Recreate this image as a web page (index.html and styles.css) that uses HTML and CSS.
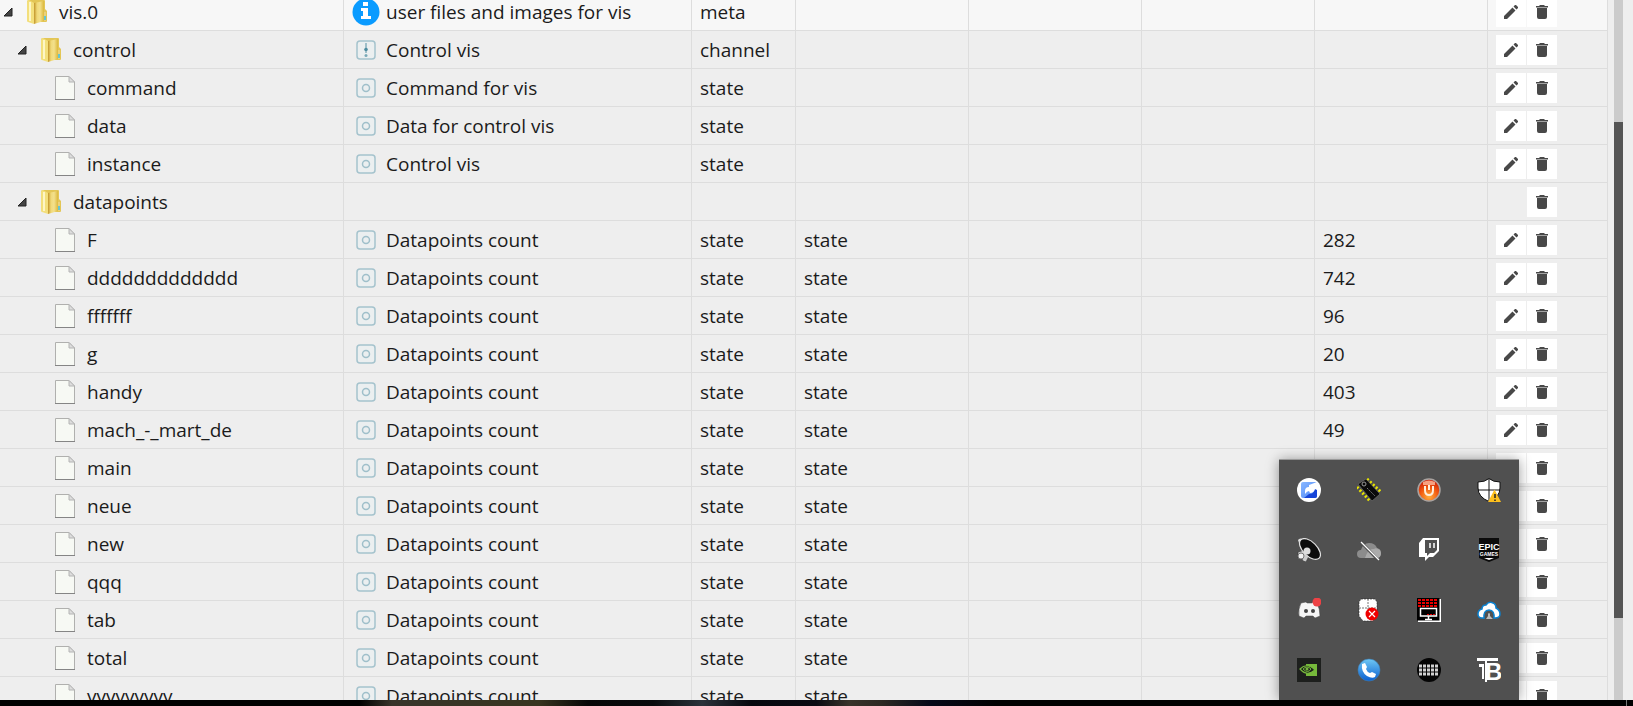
FILE: index.html
```
<!DOCTYPE html>
<html lang="en">

<head>
    <meta charset="UTF-8">
    <meta name="viewport" content="width=device-width, initial-scale=1.0">
    <title>Objects</title>
    <link rel="stylesheet" href="styles.css">
</head>

<body>
    <svg class="sprite" aria-hidden="true">
        <defs>
            <linearGradient id="gold" x1="0" x2="1">
                <stop offset="0" stop-color="#c2952a" />
                <stop offset=".3" stop-color="#f0d978" />
                <stop offset=".6" stop-color="#f3e08c" />
                <stop offset="1" stop-color="#dcb83c" />
            </linearGradient>
            <radialGradient id="red" cx=".5" cy=".8" r=".8">
                <stop offset="0" stop-color="#ffb040" />
                <stop offset=".5" stop-color="#f25a10" />
                <stop offset="1" stop-color="#c41408" />
            </radialGradient>
            <linearGradient id="blue" x2="0" y2="1">
                <stop offset="0" stop-color="#6fc8f5" />
                <stop offset="1" stop-color="#0a5fd0" />
            </linearGradient>
            <linearGradient id="square" x2="1" y2="1">
                <stop offset="0" stop-color="#8ab8ff" />
                <stop offset="1" stop-color="#4a86f8" />
            </linearGradient>
        </defs>
        <symbol id="arrow" viewBox="0 0 10 10">
            <path d="M9 1v8H1z" fill="#444" stroke="#222" stroke-linejoin="round" />
        </symbol>
        <symbol id="folder" viewBox="0 0 24 24">
            <path d="M4 0h15q1 0 1 1v8l2 2v10q0 1-1 1H4l-2-1V2q0-2 2-2z" fill="#e3c656" />
            <path d="M9 3l10-2v20l-10 3z" fill="url(#gold)" />
            <path d="M2 2q0-2 2-2l5 3v21l-6-2-1-1z" fill="#f3df7c" />
            <path d="M5 2v19" stroke="#fdf6c6" stroke-width="2" />
            <path d="M19 12h2v9h-2z" fill="#ead07a" />
            <path d="M19 16h2v4h-2z" fill="#65c5cf" />
        </symbol>
        <symbol id="file" viewBox="0 0 24 24">
            <path d="M2.5 .5H16l5.500 5.500V23.500h-19z" fill="#f7f9f4" stroke="#b0b0ae" />
            <path d="M2 23.500h20" stroke="#858585" />
            <path d="M16 .5V6h5.500z" fill="#ddd" stroke="#b4b4b4" />
        </symbol>
        <symbol id="info" viewBox="0 0 28 28">
            <circle cx="14" cy="14" r="13.500" fill="#0a9bff" />
            <path d="M11 4h5v4h-5zM9 10h7v8h3v3H9v-3h2v-5H9z" fill="#fff" />
        </symbol>
        <symbol id="channel" viewBox="0 0 20 20">
            <rect x="1" y="1" width="18" height="18" rx="3" fill="#ebeff0" stroke="#a5c3cd" stroke-width="1.500" />
            <path d="M10 3v10" stroke="#5590a2" />
            <circle cx="10" cy="9.500" r="1.800" fill="#4d8da0" />
            <circle cx="10" cy="15.500" r="1.500" fill="#79a9b7" />
        </symbol>
        <symbol id="state" viewBox="0 0 20 20">
            <rect x="1" y="1" width="18" height="18" rx="3" fill="#ebeff0" stroke="#a5c3cd" stroke-width="1.500" />
            <circle cx="10" cy="10" r="3.500" fill="none" stroke="#9fbfca" stroke-width="1.500" />
        </symbol>
        <symbol id="pencil" viewBox="0 0 14 14">
            <path d="M0 11l8.500-8.500 3 3L3 14H0zM9.500 1.500L11 0h1l2 2v1l-1.500 1.500z" fill="#484848" />
        </symbol>
        <symbol id="trash" viewBox="0 0 12 14">
            <path d="M1 3h10v9q0 2-2 2H3q-2 0-2-2zM0 1h3l1-1h4l1 1h3v1.500H0z" fill="#484848" />
        </symbol>
    </svg>

    <main class="objects">
        <table class="tree">
            <colgroup>
                <col class="col-id">
                <col class="col-name">
                <col class="col-type">
                <col class="col-mid">
                <col class="col-mid">
                <col class="col-mid">
                <col class="col-mid">
                <col class="col-buttons">
            </colgroup>
            <tbody>
                <tr class="root">
                    <td><div class="node"><svg class="arrow"><use href="#arrow" /></svg><svg class="icon"><use href="#folder" /></svg>vis.0</div></td>
                    <td><div class="name"><svg class="info"><use href="#info" /></svg>user files and images for vis</div></td>
                    <td>meta</td><td></td><td></td><td></td><td></td>
                    <td><div class="buttons"><button aria-label="Edit"><svg class="pencil"><use href="#pencil" /></svg></button><button aria-label="Delete"><svg class="trash"><use href="#trash" /></svg></button></div></td>
                </tr>
                <tr>
                    <td><div class="node level-1"><svg class="arrow"><use href="#arrow" /></svg><svg class="icon"><use href="#folder" /></svg>control</div></td>
                    <td><div class="name"><svg class="kind"><use href="#channel" /></svg>Control vis</div></td>
                    <td>channel</td><td></td><td></td><td></td><td></td>
                    <td><div class="buttons"><button aria-label="Edit"><svg class="pencil"><use href="#pencil" /></svg></button><button aria-label="Delete"><svg class="trash"><use href="#trash" /></svg></button></div></td>
                </tr>
                <tr>
                    <td><div class="node level-2"><svg class="icon"><use href="#file" /></svg>command</div></td>
                    <td><div class="name"><svg class="kind"><use href="#state" /></svg>Command for vis</div></td>
                    <td>state</td><td></td><td></td><td></td><td></td>
                    <td><div class="buttons"><button aria-label="Edit"><svg class="pencil"><use href="#pencil" /></svg></button><button aria-label="Delete"><svg class="trash"><use href="#trash" /></svg></button></div></td>
                </tr>
                <tr>
                    <td><div class="node level-2"><svg class="icon"><use href="#file" /></svg>data</div></td>
                    <td><div class="name"><svg class="kind"><use href="#state" /></svg>Data for control vis</div></td>
                    <td>state</td><td></td><td></td><td></td><td></td>
                    <td><div class="buttons"><button aria-label="Edit"><svg class="pencil"><use href="#pencil" /></svg></button><button aria-label="Delete"><svg class="trash"><use href="#trash" /></svg></button></div></td>
                </tr>
                <tr>
                    <td><div class="node level-2"><svg class="icon"><use href="#file" /></svg>instance</div></td>
                    <td><div class="name"><svg class="kind"><use href="#state" /></svg>Control vis</div></td>
                    <td>state</td><td></td><td></td><td></td><td></td>
                    <td><div class="buttons"><button aria-label="Edit"><svg class="pencil"><use href="#pencil" /></svg></button><button aria-label="Delete"><svg class="trash"><use href="#trash" /></svg></button></div></td>
                </tr>
                <tr>
                    <td><div class="node level-1"><svg class="arrow"><use href="#arrow" /></svg><svg class="icon"><use href="#folder" /></svg>datapoints</div></td>
                    <td></td><td></td><td></td><td></td><td></td><td></td>
                    <td><div class="buttons"><button aria-label="Delete"><svg class="trash"><use href="#trash" /></svg></button></div></td>
                </tr>
                <tr>
                    <td><div class="node level-2"><svg class="icon"><use href="#file" /></svg>F</div></td>
                    <td><div class="name"><svg class="kind"><use href="#state" /></svg>Datapoints count</div></td>
                    <td>state</td><td>state</td><td></td><td></td><td>282</td>
                    <td><div class="buttons"><button aria-label="Edit"><svg class="pencil"><use href="#pencil" /></svg></button><button aria-label="Delete"><svg class="trash"><use href="#trash" /></svg></button></div></td>
                </tr>
                <tr>
                    <td><div class="node level-2"><svg class="icon"><use href="#file" /></svg>ddddddddddddd</div></td>
                    <td><div class="name"><svg class="kind"><use href="#state" /></svg>Datapoints count</div></td>
                    <td>state</td><td>state</td><td></td><td></td><td>742</td>
                    <td><div class="buttons"><button aria-label="Edit"><svg class="pencil"><use href="#pencil" /></svg></button><button aria-label="Delete"><svg class="trash"><use href="#trash" /></svg></button></div></td>
                </tr>
                <tr>
                    <td><div class="node level-2"><svg class="icon"><use href="#file" /></svg>fffffff</div></td>
                    <td><div class="name"><svg class="kind"><use href="#state" /></svg>Datapoints count</div></td>
                    <td>state</td><td>state</td><td></td><td></td><td>96</td>
                    <td><div class="buttons"><button aria-label="Edit"><svg class="pencil"><use href="#pencil" /></svg></button><button aria-label="Delete"><svg class="trash"><use href="#trash" /></svg></button></div></td>
                </tr>
                <tr>
                    <td><div class="node level-2"><svg class="icon"><use href="#file" /></svg>g</div></td>
                    <td><div class="name"><svg class="kind"><use href="#state" /></svg>Datapoints count</div></td>
                    <td>state</td><td>state</td><td></td><td></td><td>20</td>
                    <td><div class="buttons"><button aria-label="Edit"><svg class="pencil"><use href="#pencil" /></svg></button><button aria-label="Delete"><svg class="trash"><use href="#trash" /></svg></button></div></td>
                </tr>
                <tr>
                    <td><div class="node level-2"><svg class="icon"><use href="#file" /></svg>handy</div></td>
                    <td><div class="name"><svg class="kind"><use href="#state" /></svg>Datapoints count</div></td>
                    <td>state</td><td>state</td><td></td><td></td><td>403</td>
                    <td><div class="buttons"><button aria-label="Edit"><svg class="pencil"><use href="#pencil" /></svg></button><button aria-label="Delete"><svg class="trash"><use href="#trash" /></svg></button></div></td>
                </tr>
                <tr>
                    <td><div class="node level-2"><svg class="icon"><use href="#file" /></svg>mach_-_mart_de</div></td>
                    <td><div class="name"><svg class="kind"><use href="#state" /></svg>Datapoints count</div></td>
                    <td>state</td><td>state</td><td></td><td></td><td>49</td>
                    <td><div class="buttons"><button aria-label="Edit"><svg class="pencil"><use href="#pencil" /></svg></button><button aria-label="Delete"><svg class="trash"><use href="#trash" /></svg></button></div></td>
                </tr>
                <tr>
                    <td><div class="node level-2"><svg class="icon"><use href="#file" /></svg>main</div></td>
                    <td><div class="name"><svg class="kind"><use href="#state" /></svg>Datapoints count</div></td>
                    <td>state</td><td>state</td><td></td><td></td><td></td>
                    <td><div class="buttons"><button aria-label="Edit"><svg class="pencil"><use href="#pencil" /></svg></button><button aria-label="Delete"><svg class="trash"><use href="#trash" /></svg></button></div></td>
                </tr>
                <tr>
                    <td><div class="node level-2"><svg class="icon"><use href="#file" /></svg>neue</div></td>
                    <td><div class="name"><svg class="kind"><use href="#state" /></svg>Datapoints count</div></td>
                    <td>state</td><td>state</td><td></td><td></td><td></td>
                    <td><div class="buttons"><button aria-label="Edit"><svg class="pencil"><use href="#pencil" /></svg></button><button aria-label="Delete"><svg class="trash"><use href="#trash" /></svg></button></div></td>
                </tr>
                <tr>
                    <td><div class="node level-2"><svg class="icon"><use href="#file" /></svg>new</div></td>
                    <td><div class="name"><svg class="kind"><use href="#state" /></svg>Datapoints count</div></td>
                    <td>state</td><td>state</td><td></td><td></td><td></td>
                    <td><div class="buttons"><button aria-label="Edit"><svg class="pencil"><use href="#pencil" /></svg></button><button aria-label="Delete"><svg class="trash"><use href="#trash" /></svg></button></div></td>
                </tr>
                <tr>
                    <td><div class="node level-2"><svg class="icon"><use href="#file" /></svg>qqq</div></td>
                    <td><div class="name"><svg class="kind"><use href="#state" /></svg>Datapoints count</div></td>
                    <td>state</td><td>state</td><td></td><td></td><td></td>
                    <td><div class="buttons"><button aria-label="Edit"><svg class="pencil"><use href="#pencil" /></svg></button><button aria-label="Delete"><svg class="trash"><use href="#trash" /></svg></button></div></td>
                </tr>
                <tr>
                    <td><div class="node level-2"><svg class="icon"><use href="#file" /></svg>tab</div></td>
                    <td><div class="name"><svg class="kind"><use href="#state" /></svg>Datapoints count</div></td>
                    <td>state</td><td>state</td><td></td><td></td><td></td>
                    <td><div class="buttons"><button aria-label="Edit"><svg class="pencil"><use href="#pencil" /></svg></button><button aria-label="Delete"><svg class="trash"><use href="#trash" /></svg></button></div></td>
                </tr>
                <tr>
                    <td><div class="node level-2"><svg class="icon"><use href="#file" /></svg>total</div></td>
                    <td><div class="name"><svg class="kind"><use href="#state" /></svg>Datapoints count</div></td>
                    <td>state</td><td>state</td><td></td><td></td><td></td>
                    <td><div class="buttons"><button aria-label="Edit"><svg class="pencil"><use href="#pencil" /></svg></button><button aria-label="Delete"><svg class="trash"><use href="#trash" /></svg></button></div></td>
                </tr>
                <tr>
                    <td><div class="node level-2"><svg class="icon"><use href="#file" /></svg>vvvvvvvvv</div></td>
                    <td><div class="name"><svg class="kind"><use href="#state" /></svg>Datapoints count</div></td>
                    <td>state</td><td>state</td><td></td><td></td><td></td>
                    <td><div class="buttons"><button aria-label="Edit"><svg class="pencil"><use href="#pencil" /></svg></button><button aria-label="Delete"><svg class="trash"><use href="#trash" /></svg></button></div></td>
                </tr>
            </tbody>
        </table>
        <div class="scrollbar"><div class="thumb"></div></div>
    </main>

    <footer class="taskbar"><div class="show-desktop"></div></footer>

    <!-- Notification area -->
    <div class="tray">
        <button aria-label="Sync">
            <svg viewBox="0 0 24 24">
                <circle cx="12" cy="12" r="12" fill="#fff" />
                <rect x="4" y="4" width="16" height="16" rx="2" fill="url(#square)" />
                <path d="M20 10v8q0 2-2 2H7l5-4q5 0 5-4z" fill="#1745d8" />
                <path d="M8 16v-3q0-4 4-4V7l8-3v8l-2-1q-1 4-5 4l-1-2q-2 0-4 3z" fill="#fff" />
            </svg>
        </button>
        <button aria-label="Memory">
            <svg viewBox="0 0 24 24">
                <path d="M10 1l14 13M0 9l13 14" stroke="#e8e400" stroke-width="3" stroke-dasharray="2 2" />
                <path d="M1 6l8-5 14 15-8 7z" fill="#0a0a0a" stroke="#777" stroke-width=".6" />
                <circle cx="7" cy="6" r="2" fill="none" stroke="#999" />
                <path d="M10 10l8 8" stroke="#777" stroke-dasharray="2 1" />
            </svg>
        </button>
        <button aria-label="Power">
            <svg viewBox="0 0 24 24">
                <circle cx="12" cy="12" r="11" fill="url(#red)" stroke="#a9a3a0" stroke-width="1.500" />
                <path d="M6 4q6-3 12 0v3H6z" fill="#f7a080" />
                <path d="M8 8v4q0 5 4 5t4-5V8" fill="none" stroke="#ffeedd" stroke-width="2" />
                <path d="M12 7v5" stroke="#ffeedd" stroke-width="2" />
            </svg>
        </button>
        <button aria-label="Security">
            <svg viewBox="0 0 24 24">
                <path d="M12 .5q4 3.500 11 3.500v6q0 9-11 13.500Q1 19 1 10V4q7 0 11-3.500z" fill="#fff" stroke="#111" />
                <path d="M12 1v22M1 12h22" stroke="#111" />
                <path d="M17.500 11.500L24 24H11z" fill="#fdbf1d" />
                <path d="M18 16v4M18 21.500v1.500" stroke="#222" stroke-width="1.500" />
            </svg>
        </button>
        <button aria-label="Sound">
            <svg viewBox="0 0 24 24">
                <path d="M1 2q2-3 6 0l-3 9z" fill="#ddd" />
                <path d="M1 14l7-2 4 6-3 6-3-1-1-2-4-1z" fill="#ccc" stroke="#333" stroke-width=".6" />
                <ellipse cx="13" cy="11" rx="7" ry="13" transform="rotate(-45 13 11)" fill="#0d0d0d" stroke="#e2e2e2" stroke-width="1.200" />
                <circle cx="10" cy="13" r="3.500" fill="#ddd" />
                <circle cx="4" cy="18" r="3" fill="#f2f2f2" stroke="#777" />
            </svg>
        </button>
        <button aria-label="Cloud offline">
            <svg viewBox="0 0 24 24">
                <path d="M4 20q-4 0-4-4 0-4 4-4 2-7 8-7 6 0 8 5 4 1 4 5t-4 5z" fill="#8c8c8c" />
                <path d="M8 20q3-10 9-9 2-2 6 1l1 3q0 5-4 5z" fill="#aaa" />
                <path d="M4 4l17 18" stroke="#505050" stroke-width="3" />
                <path d="M4 4l18 18" stroke="#fff" stroke-width="1.200" />
            </svg>
        </button>
        <button aria-label="Twitch">
            <svg viewBox="0 0 24 24">
                <path d="M6 0h16v13l-6 6h-4l-4 4v-4H2V5z" fill="#fff" />
                <path d="M8 2h12v10l-3 3h-4l-3 3v-3H8z" fill="#505050" />
                <path d="M13 5v5M17 5v5" stroke="#fff" stroke-width="1.500" />
            </svg>
        </button>
        <button aria-label="Epic Games">
            <svg viewBox="0 0 24 24">
                <path d="M2 0h20v20l-10 4L2 20z" fill="#0b0b0b" />
                <path d="M7 20h10l-5 2z" fill="#fff" />
                <text class="epic" x="12" y="12">EPIC</text>
                <text class="epic-sub" x="12" y="18">GAMES</text>
            </svg>
        </button>
        <button aria-label="Discord">
            <svg viewBox="0 0 24 24">
                <path d="M4 5l5-1 1 1h5l1-1 4 1q3 6 3 13l-5 2-2-2H9l-2 2-5-2Q1 11 4 5z" fill="#f5f5f5" stroke="#444" stroke-width=".5" />
                <circle cx="9" cy="13" r="2" fill="#444" />
                <circle cx="16" cy="13" r="2" fill="#444" />
                <circle cx="20" cy="4" r="4.500" fill="#ed4245" />
            </svg>
        </button>
        <button aria-label="Device error">
            <svg viewBox="0 0 24 24">
                <path d="M4 1h14l2 3v12l-4 7H6l-4-5V4z" fill="#fff" stroke="#222" stroke-width=".6" stroke-dasharray="2 1" />
                <path d="M11 1v10M2 10h18" stroke="#777" stroke-dasharray="2 1" />
                <circle cx="15" cy="16" r="6.500" fill="#f00000" />
                <path d="M12 13l6 6M18 13l-6 6" stroke="#fff" stroke-width="1.200" />
            </svg>
        </button>
        <button aria-label="Monitor">
            <svg viewBox="0 0 24 24">
                <path d="M1 1h23v23H1z" fill="#fff" />
                <path d="M0 0h22.500v22.500H0z" fill="#000" />
                <path d="M1 2h20M1 5h20M1 8h20" stroke="#e80000" stroke-width="2" stroke-dasharray="3 1" />
                <path d="M3.500 10.500h16v7.500h-16z" fill="#000" stroke="#fff" stroke-width="1.500" />
                <path d="M10 16.500h8" stroke="#e00" stroke-dasharray="2 1" />
                <path d="M11.500 18v3M8 21.500h7" stroke="#fff" stroke-width="1.500" />
            </svg>
        </button>
        <button aria-label="Cloud storage">
            <svg viewBox="0 0 24 24">
                <path d="M5 20q-4 0-4-4t4-5q0-4 4-4 3-4 7-2 3 1 3 5 4 2 4 6t-5 4z" fill="#fff" stroke="#0b82d1" stroke-width="1.500" />
                <path d="M7 21q-1-9 5-9t5 9" fill="#505050" stroke="#0b82d1" stroke-width="1.500" />
                <path d="M9 21l2-3v-2q1-2 2 0v2l3 3z" fill="#bbb" />
            </svg>
        </button>
        <button aria-label="Nvidia">
            <svg viewBox="0 0 24 24">
                <path d="M0 0h24v24H0z" fill="#1d1f1d" />
                <path d="M9 6h11v12H9z" fill="#76b93b" />
                <path d="M3 11q7-7 15 1-8 7-15-1z" fill="#1d1f1d" stroke="#76b93b" stroke-width="1.200" />
                <path d="M6 11q4-4 8 0-3 5-8 0z" fill="none" stroke="#76b93b" />
                <circle cx="10" cy="11" r="1.500" fill="#76b93b" />
            </svg>
        </button>
        <button aria-label="Phone">
            <svg viewBox="0 0 24 24">
                <circle cx="12" cy="12" r="11" fill="url(#blue)" stroke="#3d7db5" stroke-width=".6" />
                <path d="M5 6l3-1 2 4-1 2q1 3 4 4l2-1 4 2-1 3q-3 2-8-1-6-4-5-12z" fill="#fff" />
            </svg>
        </button>
        <button aria-label="Keypad">
            <svg viewBox="0 0 24 24">
                <circle cx="12" cy="12" r="12" fill="#050505" />
                <path d="M2 8h20M2 12h20M2 16h20" stroke="#d0d0d0" stroke-width="3" stroke-dasharray="3 1" />
            </svg>
        </button>
        <button aria-label="TB">
            <svg viewBox="0 0 24 24">
                <path d="M0 0h21v3H0zM2 6h5v3H2zM5 6h2v15H5zM8 3h2v21H8z" fill="#fff" />
                <text class="tb" x="8" y="22">B</text>
            </svg>
        </button>
    </div>
</body>

</html>
```

FILE: styles.css
```
* {
    margin: 0;
    padding: 0;
    box-sizing: border-box;
}

body {
    display: flex;
    flex-direction: column;
    height: 100vh;
    overflow: hidden;
    background-color: #eee;
    color: #1b1b1b;
    font-family: "Open Sans", "Noto Sans", sans-serif;
    font-size: 19px;
}

svg {
    display: block;
    flex: none;
}

.sprite {
    position: absolute;
    width: 0;
    height: 0;
}

.objects {
    display: flex;
    flex: 1;
    gap: 6px;
    min-height: 0;
    overflow: hidden;
    padding-right: 10px;
}

/* Object tree */
.tree {
    width: 100%;
    align-self: flex-start;
    margin-top: -7px;
    table-layout: fixed;
    border-collapse: separate;
    border-spacing: 0;
}

.col-id {
    width: 344px;
}

.col-name {
    width: 348px;
}

.col-type {
    width: 104px;
}

.col-buttons {
    width: 120px;
}

.tree td {
    height: 38px;
    padding-left: 8px;
    line-height: 26px;
    white-space: nowrap;
    border-right: 1px solid #ddd;
    border-bottom: 1px solid #ddd;
}

.root {
    background-color: #f7f7f7;
}

.node,
.name,
.buttons {
    display: flex;
    align-items: center;
}

.tree td:first-child {
    padding-left: 3px;
}

.level-1 {
    padding-left: 14px;
}

.level-2 {
    padding-left: 50px;
}

.arrow {
    width: 10px;
    height: 10px;
    margin-right: 12px;
}

.icon {
    width: 24px;
    height: 24px;
    margin-right: 10px;
}

.info {
    width: 28px;
    height: 28px;
    margin-right: 6px;
}

.kind {
    width: 20px;
    height: 20px;
    margin: 0 10px 0 4px;
}

.buttons {
    justify-content: flex-end;
    gap: 1px;
    padding-right: 50px;
}

.buttons button {
    display: flex;
    align-items: center;
    justify-content: center;
    width: 30px;
    height: 30px;
    border: none;
    background-color: #fff;
}

.pencil {
    width: 14px;
    height: 14px;
}

.trash {
    width: 12px;
    height: 14px;
}

.scrollbar {
    display: grid;
    flex: none;
    grid-template-rows: 122fr 496fr 82fr;
    width: 9px;
    background-color: #cbcbcb;
}

.thumb {
    grid-row: 2;
    background-color: #555;
}

.taskbar {
    display: flex;
    justify-content: flex-end;
    height: 6px;
    padding-right: 6px;
    background: linear-gradient(to right, #000 22%, #38342a 24%, #38341f 33%, #060606 36%, #080a0c 40%, #2b323a 43%, #05060c 46%, #0a0a12 50%, #38332a 52%, #2c2822 54%, #050818 57%, #04040c 59%, #000 61%);
}

.show-desktop {
    width: 1px;
    background-color: #777;
}

/* Tray popup lies over the table */
.tray {
    position: absolute;
    right: 114px;
    bottom: 6px;
    display: grid;
    grid-template-columns: repeat(4, 60px);
    background-color: #505050;
    box-shadow: 0 -1px 0 #9a9a9a, 0 0 12px rgba(0, 0, 0, 0.4);
    clip-path: inset(-20px -20px 0 -20px);
}

.tray button {
    display: flex;
    align-items: center;
    justify-content: center;
    height: 60px;
    border: none;
    background: none;
}

.tray svg {
    width: 24px;
    height: 24px;
}

.tray text {
    fill: #fff;
    font-family: "Liberation Sans", sans-serif;
    font-weight: bold;
}

.tray .epic {
    font-family: "Liberation Sans Narrow", "Liberation Sans", sans-serif;
    font-size: 9px;
    text-anchor: middle;
}

.tray .epic-sub {
    font-size: 5px;
    text-anchor: middle;
}

.tray .tb {
    font-size: 24px;
}
```
